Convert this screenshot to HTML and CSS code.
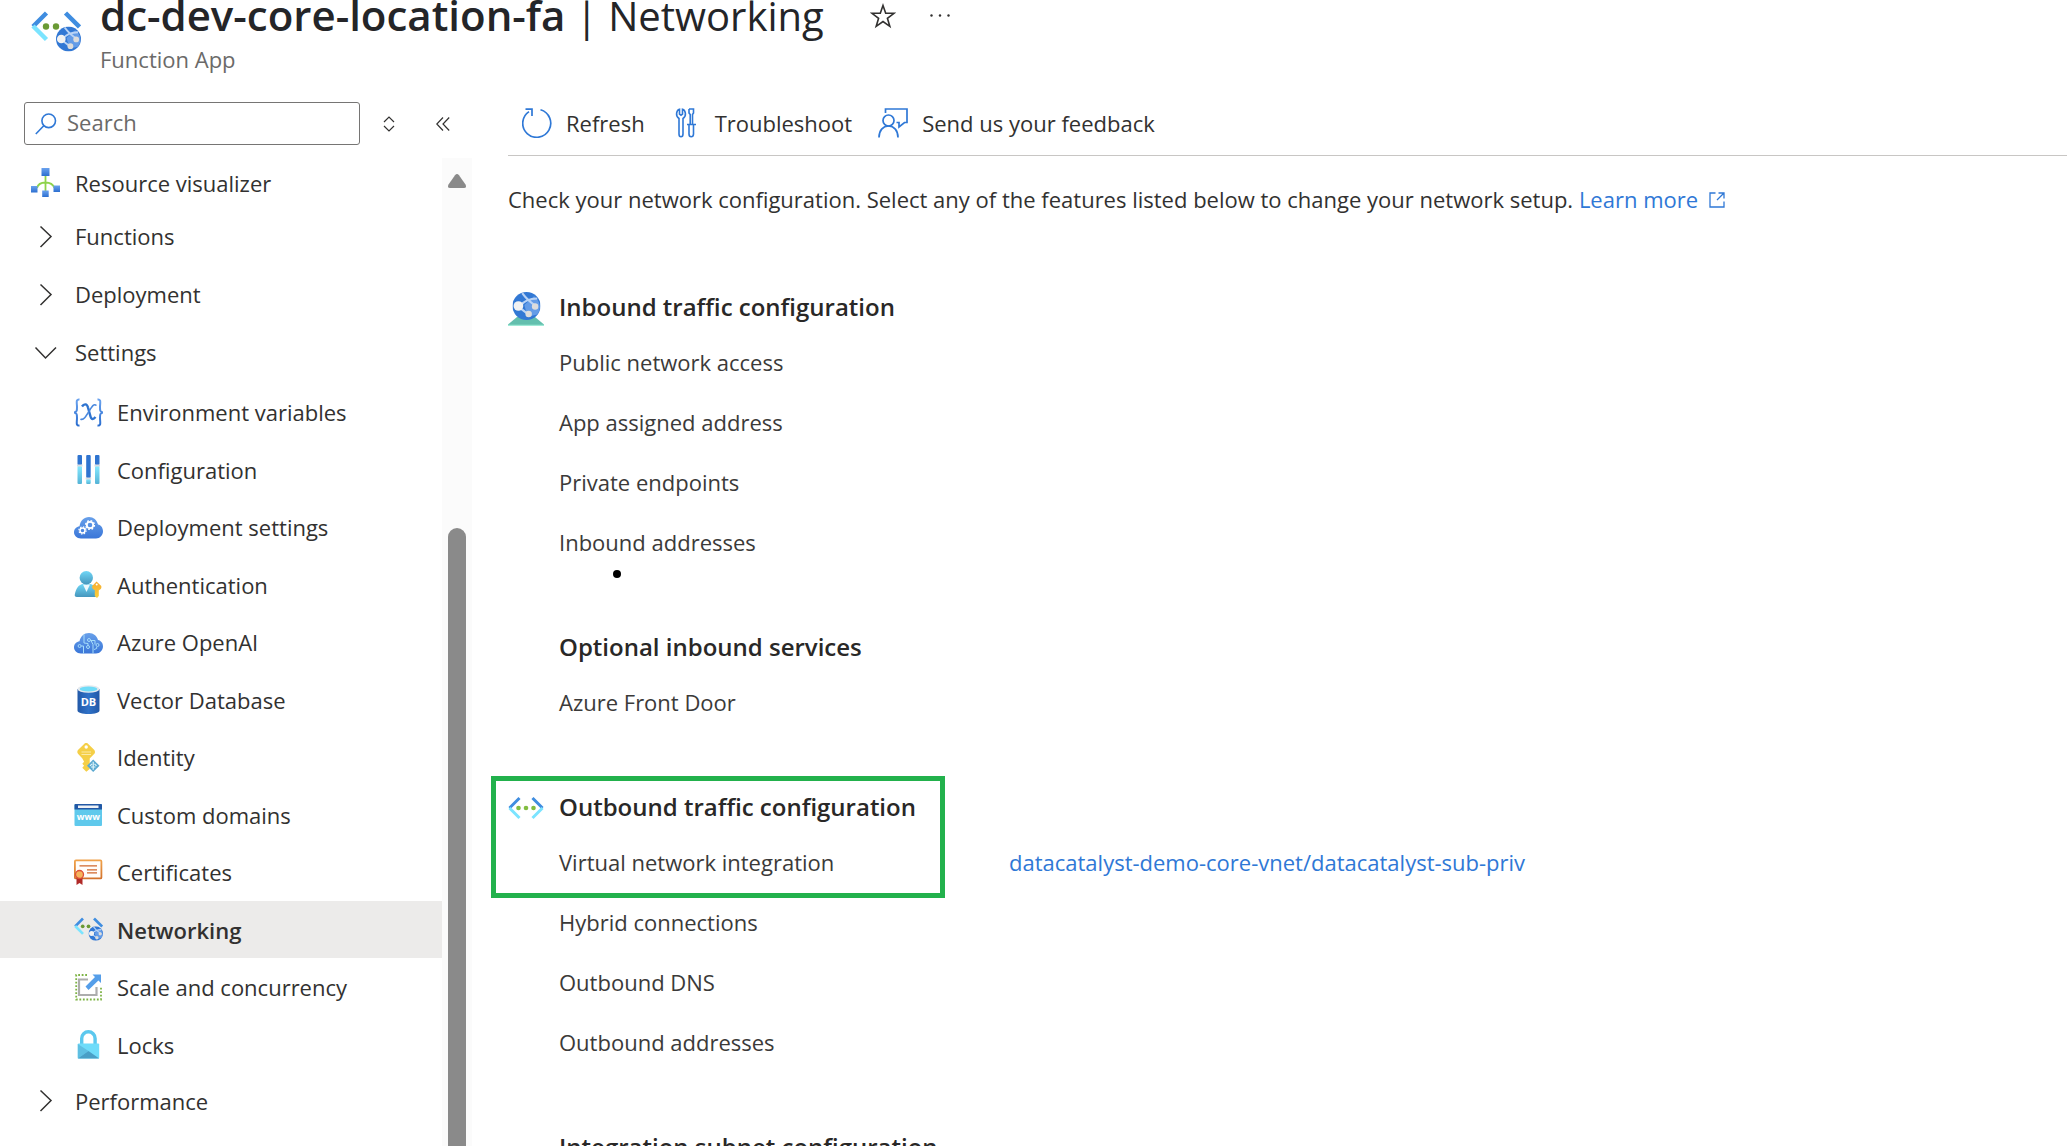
FILE: index.html
```html
<!DOCTYPE html>
<html lang="en">
<head>
<meta charset="utf-8">
<title>dc-dev-core-location-fa | Networking</title>
<link rel="stylesheet" href="styles.css">
</head>
<body>
<svg class="defs" aria-hidden="true">
  <defs>
    <linearGradient id="blue" x1="0" y1="0" x2="0" y2="1"><stop offset="0" stop-color="#6aa2ee"/><stop offset="1" stop-color="#2c6fd0"/></linearGradient>
    <linearGradient id="cloud" x1="0" y1="0" x2="0" y2="1"><stop offset="0" stop-color="#68a0ea"/><stop offset="1" stop-color="#3a76d8"/></linearGradient>
    <linearGradient id="teal" x1="0" y1="0" x2="0" y2="1"><stop offset="0" stop-color="#6fd6f6"/><stop offset="1" stop-color="#4596bd"/></linearGradient>
    <linearGradient id="aqua" x1="0" y1="0" x2="0" y2="1"><stop offset="0" stop-color="#86e9ff"/><stop offset="1" stop-color="#55b3d6"/></linearGradient>
    <linearGradient id="gold" x1="0" y1="0" x2="0" y2="1"><stop offset="0" stop-color="#f6a92e"/><stop offset="1" stop-color="#fbd13c"/></linearGradient>
    <linearGradient id="navy" x1="0" y1="0" x2="1" y2="0"><stop offset="0" stop-color="#2259a8"/><stop offset=".5" stop-color="#2f72c8"/><stop offset="1" stop-color="#2259a8"/></linearGradient>
    <linearGradient id="orange" x1="0" y1="0" x2="0" y2="1"><stop offset="0" stop-color="#f0a24a"/><stop offset="1" stop-color="#d3732c"/></linearGradient>
    <symbol id="globe" viewBox="0 0 26 26">
      <circle cx="13" cy="13" r="13" fill="#3278d4"/>
      <path d="M11 12 20 4a12 12 0 0 1 3 17l-9 2z" fill="#76a8ee" opacity=".75"/>
      <path d="M7 13C10 9 16 6 23 6M9 1c3 4 8 9 13 12M6 14l9 7" fill="none" stroke="#b9d3f5" stroke-width="2"/>
      <circle cx="5.500" cy="13" r="4.500" fill="#f2f2f2"/>
      <circle cx="21" cy="13.500" r="3" fill="#dcdcdc"/>
      <circle cx="15" cy="20.500" r="3" fill="#dcdcdc"/>
    </symbol>
    <symbol id="network" viewBox="0 0 50 42">
      <path d="M15.500 2 2 15.500" stroke="#3f8de0" stroke-width="4.500" fill="none"/>
      <path d="M2 15 15.500 28.500" stroke="#7be4ff" stroke-width="4.500" fill="none"/>
      <path d="M34.500 2 48.500 16" stroke="#3f8de0" stroke-width="4.500" fill="none"/>
      <circle cx="15" cy="15.500" r="3.200" fill="#6a9a35"/>
      <circle cx="25" cy="15.500" r="3.200" fill="#6a9a35"/>
      <use href="#globe" x="25" y="15.500" width="25" height="25"/>
    </symbol>
    <symbol id="chevron" viewBox="0 0 29 29">
      <path d="M9.500 4.500 20 14.500 9.500 25" fill="none" stroke="#323130" stroke-width="1.500"/>
    </symbol>
  </defs>
</svg>

<div class="app">
  <header class="header">
    <svg class="header-icon" viewBox="0 0 50 42"><use href="#network"/></svg>
    <div>
      <div class="title-row">
        <h1 class="title"><strong class="resource">dc-dev-core-location-fa</strong> | Networking</h1>
        <button class="icon-button" type="button" aria-label="Add to favorites">
          <svg width="26" height="26" viewBox="0 0 26 26"><path d="M13 2.500 15.700 10.200 24 10.300 17.400 15.300 19.800 23.300 13 18.500 6.200 23.300 8.600 15.300 2 10.300 10.300 10.200Z" fill="none" stroke="#323130" stroke-width="1.600"/></svg>
        </button>
        <button class="icon-button" type="button" aria-label="More">
          <svg width="20" height="26" viewBox="0 0 20 26"><g fill="#323130"><circle cx="1.500" cy="12.500" r="1.200"/><circle cx="10" cy="12.500" r="1.200"/><circle cx="18.500" cy="12.500" r="1.200"/></g></svg>
        </button>
      </div>
      <p class="subtitle">Function App</p>
    </div>
  </header>

  <div class="columns">
    <aside class="sidebar">
      <div class="search-row">
        <label class="search">
          <svg width="22" height="22" viewBox="0 0 22 22"><g fill="none" stroke="#2f78d6" stroke-width="1.600"><circle cx="13.700" cy="7.800" r="6.800"/><path d="M9 12.500.800 21"/></g></svg>
          <input class="search-input" type="search" placeholder="Search" aria-label="Search">
        </label>
        <button class="icon-button" type="button" aria-label="Expand or collapse all">
          <svg width="12" height="16" viewBox="0 0 12 16"><path d="M1 6 6 1l5 5M1 10l5 5 5-5" fill="none" stroke="#323130" stroke-width="1.200"/></svg>
        </button>
        <button class="icon-button" type="button" aria-label="Collapse menu">
          <svg width="14" height="16" viewBox="0 0 14 16"><path d="M7 1.500.800 8 7 14.500M13.200 1.500 7 8l6.200 6.500" fill="none" stroke="#323130" stroke-width="1.200"/></svg>
        </button>
      </div>

      <div class="menu-area">
        <nav class="menu">
          <a class="item first" href="#">
            <svg class="icon" viewBox="0 0 29 29"><path d="M14.500 7v18M6 20c1-4 4-5.500 8.500-5.500S22 16 23.500 20" fill="none" stroke="#8ed34a" stroke-width="1.800"/><g fill="url(#blue)"><rect x="10.500" width="8" height="8"/><rect y="18" width="6.500" height="6.500"/><rect x="22.500" y="17.500" width="6.500" height="6.500"/><rect x="11.200" y="22.500" width="6.500" height="6.500"/></g></svg>
            Resource visualizer</a>
          <button class="item" type="button"><svg class="icon" viewBox="0 0 29 29"><use href="#chevron"/></svg>Functions</button>
          <button class="item" type="button"><svg class="icon" viewBox="0 0 29 29"><use href="#chevron"/></svg>Deployment</button>
          <button class="item" type="button" aria-expanded="true">
            <svg class="icon" viewBox="0 0 29 29"><path d="M4.500 9.500 14.500 20 25 9.500" fill="none" stroke="#323130" stroke-width="1.500"/></svg>Settings</button>

          <ul class="submenu">
            <li><a class="item" href="#">
              <svg class="icon" viewBox="0 0 29 29"><g fill="none" stroke="url(#blue)" stroke-width="2"><path d="M5.500 1.500C1.500 1 3 5 3 9s0 4.500-3 5.500c3 1 3 1.500 3 5.500s-1.500 8 2.500 7.500M23.500 1.500C27.500 1 26 5 26 9s0 4.500 3 5.500c-3 1-3 1.500-3 5.500s1.500 8-2.500 7.500"/></g><path d="M8 8.500c2-3 5-3 6 1l2.500 9c1 3.500 3 3 5 .5" fill="none" stroke="#2f74d0" stroke-width="2.400"/><path d="M22.500 7.500c-2.500-2-4 0-7 5s-6 10.500-9 8.500" fill="none" stroke="#4a88de" stroke-width="1.600"/></svg>
              Environment variables</a></li>
            <li><a class="item" href="#">
              <svg class="icon" viewBox="0 0 29 29"><g fill="url(#aqua)"><rect x="3.500" y="11" width="4.500" height="18" rx="1"/><rect x="12.200" y="24" width="4.500" height="5" rx="1"/><rect x="21" y="11" width="4.500" height="18" rx="1"/></g><g fill="#2f74d0"><rect x="3.500" width="4.500" height="10" rx="1"/><rect x="12.200" width="4.500" height="23" rx="1"/><rect x="21" width="4.500" height="10" rx="1"/></g><g fill="#d8dde3"><rect x="3" y="9.500" width="5.500" height="2"/><rect x="11.700" y="22.500" width="5.500" height="2"/><rect x="20.500" y="9.500" width="5.500" height="2"/></g></svg>
              Configuration</a></li>
            <li><a class="item" href="#">
              <svg class="icon" viewBox="0 0 29 29"><path d="M7 25.500C2.500 25.500 0 22.500 0 19.300s2.500-5.800 5.500-6.100C6.500 7.500 10 4 15 4c4.500 0 8 3 9 7.500 3 .5 5 3.500 5 6.800 0 4-3 7.200-7 7.200Z" fill="url(#cloud)"/><g fill="none" stroke="#fff"><circle cx="16" cy="12" r="3.200" stroke-width="1.800"/><circle cx="16" cy="12" r="4.400" stroke-width="1.400" stroke-dasharray="1.700 1.750"/><circle cx="8.500" cy="17.500" r="2.500" stroke-width="1.500"/><circle cx="8.500" cy="17.500" r="3.600" stroke-width="1.200" stroke-dasharray="1.400 1.430"/></g></svg>
              Deployment settings</a></li>
            <li><a class="item" href="#">
              <svg class="icon" viewBox="0 0 29 29"><path d="M3 27c-2 0-2.500-1-2.200-2.500C2 18 5 14.500 9 14h7c4 .5 6 4 7 10.500.2 1.500-.5 2.500-2 2.500Z" fill="url(#teal)"/><path d="M9 14.500h7L12.500 22z" fill="#eef8fc"/><circle cx="12.300" cy="7.800" r="6.700" fill="url(#teal)"/><path d="M22.500 11.500 27.300 16c.5 2-.5 3.700-2.500 4.200V26L23 28l-2.200-2v-6c-2-.5-3-2-2.600-4Z" fill="url(#gold)"/><circle cx="22.700" cy="14.600" r="1" fill="#fff"/></svg>
              Authentication</a></li>
            <li><a class="item" href="#">
              <svg class="icon" viewBox="0 0 29 29"><path d="M7 25.500C2.500 25.500 0 22.500 0 19.300s2.500-5.800 5.500-6.100C6.500 8.500 10 5 15 5c4.500 0 8 3 9 7 3 .5 5 3.300 5 6.300 0 4-3 7.200-7 7.200Z" fill="url(#cloud)"/><g fill="none" stroke="#a5dcfa" stroke-width="1"><path d="M9.500 25.500V18H7.200M10 6.500V15l4 .500v2M19 25.500v-9l-2-4M16.500 12.500H21v4M20 21.500l2.700-1V19"/><circle cx="5.600" cy="18" r="1.500"/><circle cx="15" cy="12" r="1.500"/><circle cx="14" cy="19" r="1.500"/><circle cx="23.500" cy="17" r="1.500"/></g></svg>
              Azure OpenAI</a></li>
            <li><a class="item" href="#">
              <svg class="icon" viewBox="0 0 29 29"><path d="M3.500 4v21.500C3.500 27.500 8 29 14.500 29s11-1.500 11-3.500V4Z" fill="url(#navy)"/><ellipse cx="14.500" cy="4" rx="11" ry="3.800" fill="#e4e9ee"/><ellipse cx="14.500" cy="4" rx="8.800" ry="2.600" fill="#6fdcf8"/><text class="db-label" x="14.500" y="20.500" text-anchor="middle">DB</text></svg>
              Vector Database</a></li>
            <li><a class="item" href="#">
              <svg class="icon" viewBox="0 0 29 29"><path d="M12.200 0c1 0 1.700.5 2.300 1.200l5.600 5.600c1.200 1.200 1.200 3 0 4.300l-4.400 4.300V26l-3.400 2.800-4-4 1.800-2-1.800-2 1.800-2-1.900-3.600-4-4.100c-1.200-1.200-1.200-3 0-4.300l5.700-5.600C10.500.500 11.200 0 12.200 0Z" fill="#f5cf47"/><circle cx="12.200" cy="4" r="1.700" fill="#fff"/><path d="M7.500 9h9.500M7.500 11.500h9.500" stroke="#fbeaa8" stroke-width="1"/><path d="M19.200 16.500 25.500 22.800 19.200 29 13 22.800Z" fill="#5ba9d0"/><path d="M19.200 18.800v8M16 22.800l2-2M22.500 22.800l-2-2M17 24h4.500" stroke="#e0f5fa" stroke-width="1.200"/></svg>
              Identity</a></li>
            <li><a class="item" href="#">
              <svg class="icon" viewBox="0 0 29 29"><rect x=".5" y="4" width="27.500" height="22" rx="1" fill="#5fc9ec"/><path d="M.5 9.500V5q0-1 1-1H27q1 0 1 1v4.500Z" fill="#2258a5"/><rect x="4" y="5.500" width="20.500" height="2.500" fill="#eef1f5"/><text class="www-label" x="14.300" y="20" text-anchor="middle">www</text></svg>
              Custom domains</a></li>
            <li><a class="item" href="#">
              <svg class="icon" viewBox="0 0 29 29"><rect x=".9" y="2.400" width="26.500" height="18" rx="1" fill="#fffdfa" stroke="url(#orange)" stroke-width="1.800"/><path d="M5.500 7.800h17.500M13 11.800h10M13 14.800h10" stroke="#d0672d" stroke-width="1.200"/><path d="M2.500 18.500h6V27l-3-2-3 2Z" fill="#b02a28"/><circle cx="5.500" cy="16.500" r="4" fill="#f5b45c" stroke="#df5037" stroke-width="1.300"/></svg>
              Certificates</a></li>
            <li><a class="item current" href="#" aria-current="page">
              <svg class="icon" viewBox="0 0 50 42"><use href="#network"/></svg>
              Networking</a></li>
            <li><a class="item" href="#">
              <svg class="icon" viewBox="0 0 29 29"><path d="M13 2H2.200v24.500H27V13" fill="none" stroke="#7db344" stroke-width="1.800" stroke-dasharray="1.800 1.700"/><path d="M14 6.500H5V22h17.500v-8" fill="none" stroke="#adadad" stroke-width="2.200"/><path d="M11.500 13.500 21 4l-2.500-2.500H27V10l-2.600-2.500L14.500 17Z" fill="#559ee9"/></svg>
              Scale and concurrency</a></li>
            <li><a class="item" href="#">
              <svg class="icon" viewBox="0 0 29 29"><path d="M7.700 15V8.500a6.700 6.700 0 0 1 13.400 0V15" fill="none" stroke="#5cc8ee" stroke-width="3.400"/><rect x="3.800" y="13.500" width="21.400" height="15" rx="1" fill="#6fdcfa"/><path d="M3.800 14 14.500 21 3.800 28.500Z" fill="#5fbfe2"/><path d="M3.800 28.500 14.500 21l10.700 7.500Z" fill="#4a9fc6"/></svg>
              Locks</a></li>
          </ul>
          <button class="item last" type="button"><svg class="icon" viewBox="0 0 29 29"><use href="#chevron"/></svg>Performance</button>
        </nav>
        <div class="scrollbar" aria-hidden="true">
          <svg width="18" height="14" viewBox="0 0 18 14"><path d="M7 1.200q2-2.400 4 0L17.500 10.500Q19 14 16 14H2Q-1 14 .5 10.500Z" fill="#8a8a8a"/></svg>
          <div class="thumb"></div>
        </div>
      </div>
    </aside>

    <main class="content">
      <div class="toolbar">
        <button class="command" type="button">
          <svg width="30" height="30" viewBox="0 0 30 30"><path d="M18.500 1.800A14 14 0 1 1 7 3.600M3.500 1.200H10V8" fill="none" stroke="#2f78d6" stroke-width="1.700"/></svg>
          Refresh</button>
        <button class="command" type="button">
          <svg width="30" height="30" viewBox="-5 0 30 30"><path d="M3 10.500V26q0 2.800 2 2.800T7 26V10.500C11 8 9.500 2 6.500 1.200V6L5 7.200 3.500 6V1.200C.500 2-1 8 3 10.500ZM13 1h4.500v4l-1 1.500v9.500M13 1v4l1.200 1.500v9.500M11 16.500h9M13 16.500V26q0 2.800 2.200 2.800T17.500 26v-9.500" fill="none" stroke="#2f78d6" stroke-width="1.600"/></svg>
          Troubleshoot</button>
        <button class="command" type="button">
          <svg width="30" height="30" viewBox="0 0 30 30"><path d="M7.500 5V1H29v13.500h-2.500L21 19v-4.500h-2.500M1 29.500c0-7 4-11.500 9.500-11.500S20 22.500 20 29.500" fill="none" stroke="#2f78d6" stroke-width="1.700"/><circle cx="10.500" cy="12.500" r="5.500" fill="none" stroke="#2f78d6" stroke-width="1.700"/></svg>
          Send us your feedback</button>
      </div>

      <p class="intro">Check your network configuration. Select any of the features listed below to change your network setup.
        <a class="link" href="#">Learn more<svg class="external" width="16" height="16" viewBox="0 0 16 16"><path d="M6.500 1H1v14h14V9.500M9.500 1H15v5.500M15 1 8 8" fill="none" stroke="#2f78d6" stroke-width="1.300"/></svg></a></p>

      <section class="group">
        <h2 class="heading">
          <svg class="heading-icon" viewBox="0 -4 36 38"><path d="M9 25h18l9 7.500v1.500H0v-1.500Z" fill="#63bfae"/><path d="M0 32.800h36V34H0Z" fill="#9fead6"/><use href="#globe" x="4.500" y="0" width="28" height="28"/></svg>
          Inbound traffic configuration</h2>
        <dl class="rows">
          <dt>Public network access</dt><dd></dd>
          <dt>App assigned address</dt><dd></dd>
          <dt>Private endpoints</dt><dd></dd>
          <dt class="marked">Inbound addresses</dt><dd></dd>
        </dl>
      </section>

      <section class="group">
        <h2 class="heading plain">Optional inbound services</h2>
        <dl class="rows">
          <dt>Azure Front Door</dt><dd></dd>
        </dl>
      </section>

      <section class="group highlighted">
        <h2 class="heading">
          <svg class="heading-icon" viewBox="0 -2 36 38"><g fill="none" stroke-width="3"><path d="M11.500 8 1.500 18M24.500 8l10 10" stroke="#3f8de0"/><path d="M1.500 18l10 10M34.500 18l-10 10" stroke="#7be4ff"/></g><g fill="#82bd41"><circle cx="10.500" cy="18" r="2.300"/><circle cx="18" cy="18" r="2.300"/><circle cx="25.500" cy="18" r="2.300"/></g></svg>
          Outbound traffic configuration</h2>
        <dl class="rows">
          <dt>Virtual network integration</dt><dd><a class="link" href="#">datacatalyst-demo-core-vnet/datacatalyst-sub-priv</a></dd>
          <dt>Hybrid connections</dt><dd></dd>
          <dt>Outbound DNS</dt><dd></dd>
          <dt>Outbound addresses</dt><dd></dd>
        </dl>
      </section>

      <section class="group">
        <h2 class="heading plain">Integration subnet configuration</h2>
      </section>
    </main>
  </div>
</div>
</body>
</html>
```
FILE: styles.css
```css
*,
*::before,
*::after {
  box-sizing: border-box;
}

body {
  margin: 0;
  background: #fff;
  color: #323130;
  font: 22px/30px "Segoe UI", "Open Sans", "Noto Sans", sans-serif;
}

h1, h2, p, ul, dl, dd {
  margin: 0;
  padding: 0;
}

button {
  padding: 0;
  border: 0;
  background: none;
  color: inherit;
  font: inherit;
  cursor: pointer;
}

svg {
  display: block;
  flex: none;
}

.defs {
  position: absolute;
  width: 0;
  height: 0;
}

.app {
  display: flex;
  flex-direction: column;
  height: 100vh;
  overflow: hidden;
}

/* Header, scrolled slightly past the top edge */
.header {
  display: flex;
  gap: 19px;
  margin-top: -13px;
  padding-left: 31px;
}

.header-icon {
  width: 50px;
  height: 42px;
  margin-top: 24px;
}

.title-row {
  display: flex;
  align-items: center;
  height: 57px;
}

.title {
  margin-right: 46px;
  color: #242528;
  font-size: 40px;
  font-weight: 400;
  line-height: 58px;
  white-space: nowrap;
}

.resource {
  font-size: 42px;
  font-weight: 600;
}

.title-row .icon-button + .icon-button {
  margin-left: 34px;
}

.subtitle {
  color: #6b6a69;
}

.columns {
  display: flex;
  flex: 1;
  min-height: 0;
  margin-top: 28px;
}

/* Sidebar */
.sidebar {
  display: flex;
  flex: none;
  flex-direction: column;
  width: 472px;
}

.search-row {
  display: flex;
  align-items: center;
  padding-left: 24px;
}

.search {
  display: flex;
  align-items: center;
  gap: 10px;
  width: 336px;
  height: 43px;
  padding: 0 10px;
  border: 1px solid #767574;
  border-radius: 3px;
}

.search-input {
  flex: 1;
  min-width: 0;
  padding: 0 0 3px;
  border: 0;
  outline: 0;
  background: none;
  color: inherit;
  font: inherit;
}

.search-input::placeholder {
  color: #6b6a69;
  opacity: 1;
}

.search + .icon-button {
  margin: 0 41px 0 23px;
}

.menu-area {
  display: flex;
  flex: 1;
  min-height: 0;
  margin-top: 13px;
}

.menu {
  flex: 1;
  overflow: hidden;
}

.item {
  display: flex;
  align-items: center;
  gap: 15px;
  width: 100%;
  height: 58px;
  padding-left: 31px;
  color: inherit;
  text-decoration: none;
  white-space: nowrap;
}

.item.first {
  height: 49px;
}

.item.last {
  height: 55px;
}

.icon {
  width: 29px;
  height: 29px;
}

.submenu {
  margin-top: 2px;
  list-style: none;
}

.submenu .item {
  gap: 14px;
  padding-left: 74px;
}

.submenu li:nth-child(even) .item {
  height: 57px;
}

.submenu .current {
  background: #ecebea;
  font-weight: 600;
}

.db-label {
  fill: #fff;
  font-size: 11px;
  font-weight: 700;
}

.www-label {
  fill: #fff;
  font-size: 9px;
  font-weight: 700;
}

.scrollbar {
  display: flex;
  flex-direction: column;
  align-items: center;
  width: 30px;
  padding-top: 16px;
  background: #fbfbfb;
}

.thumb {
  flex: 1;
  width: 18px;
  margin-top: 340px;
  border-radius: 9px 9px 0 0;
  background: #8a8a8a;
}

/* Content */
.content {
  flex: 1;
  min-width: 0;
  padding-left: 36px;
}

.toolbar {
  display: flex;
  align-items: center;
  gap: 26px;
  height: 54px;
  padding: 0 0 12px 14px;
  border-bottom: 1px solid #c8c6c4;
}

.command {
  display: flex;
  align-items: center;
  gap: 14px;
  white-space: nowrap;
}

.intro {
  margin-top: 28px;
}

.link {
  color: #2f78d6;
  text-decoration: none;
}

.external {
  display: inline-block;
  margin-left: 11px;
}

.intro + .group {
  margin-top: 68px;
}

.group {
  position: relative;
  margin-bottom: 50px;
}

.heading {
  display: flex;
  align-items: center;
  gap: 15px;
  height: 50px;
  color: #292827;
  font-size: 24px;
  font-weight: 600;
}

.heading.plain {
  padding-left: 51px;
}

.heading-icon {
  width: 36px;
  height: 38px;
}

.rows {
  display: grid;
  grid-template-columns: 450px 1fr;
  grid-auto-rows: 60px;
  align-items: center;
  padding-left: 51px;
  color: #3b3a39;
}

.marked {
  position: relative;
}

/* Annotation dot under the row label */
.marked::after {
  position: absolute;
  top: 43px;
  left: 54px;
  width: 8px;
  height: 8px;
  border-radius: 50%;
  background: #000;
  content: "";
}

/* Annotation box around the heading and its first row */
.highlighted::before {
  position: absolute;
  top: -6px;
  left: -17px;
  width: 454px;
  height: 122px;
  border: 5px solid #22b14c;
  content: "";
  pointer-events: none;
}
```
